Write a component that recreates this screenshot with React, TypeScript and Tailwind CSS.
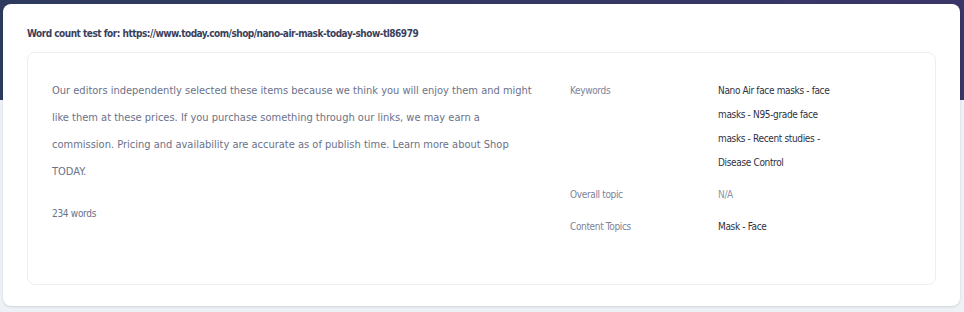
const keywords = 'Nano Air face masks - face masks - N95-grade face masks - Recent studies - Disease Control'

const body =
  'Our editors independently selected these items because we think you will enjoy them and might like them at these prices. If you purchase something through our links, we may earn a commission. Pricing and availability are accurate as of publish time. Learn more about Shop TODAY.'

export default function App() {
  return (
    <div
      className="relative h-[312px] w-[964px] overflow-hidden bg-[#eef1f6]"
      style={{ fontFamily: "'DejaVu Sans Condensed', 'DejaVu Sans', sans-serif" }}
    >
      {/* page header behind the dialog */}
      <div className="absolute inset-x-0 top-0 h-[100px] bg-gradient-to-r from-[#2e3b5e] to-[#3a3669]" />

      <div className="relative pl-[3px] pr-[4px] pt-[4px]">
        <div className="h-[302px] rounded-lg bg-white px-6 pt-[22px] shadow-sm">
          <h2 className="text-[10px] font-bold leading-4 tracking-[-0.5px] text-[#3b3f5c]">
            Word count test for: https://www.today.com/shop/nano-air-mask-today-show-tl86979
          </h2>

          <div className="mt-[10px] flex h-[233px] rounded-lg border border-[#eceef2] px-6 pt-[24px]">
            <div className="w-[490px] shrink-0">
              <p className="text-[11px] leading-[27px] text-[#6b7189]">{body}</p>
              <div className="mt-[19px] text-[10px] leading-5 tracking-[-0.3px] text-[#6b7189]">234 words</div>
            </div>

            <div className="ml-[28px] mt-[2px] flex flex-col gap-2 text-[10px] leading-6 tracking-[-0.35px]">
              <div className="flex">
                <div className="w-[148px] text-[#7d8399]">Keywords</div>
                <div className="w-[118px] text-[#2f3142]">{keywords}</div>
              </div>
              <div className="flex">
                <div className="w-[148px] text-[#7d8399]">Overall topic</div>
                <div className="w-[118px] text-[#8e93a6]">N/A</div>
              </div>
              <div className="flex">
                <div className="w-[148px] text-[#7d8399]">Content Topics</div>
                <div className="w-[118px] text-[#2f3142]">Mask - Face</div>
              </div>
            </div>
          </div>
        </div>
      </div>
    </div>
  )
}
